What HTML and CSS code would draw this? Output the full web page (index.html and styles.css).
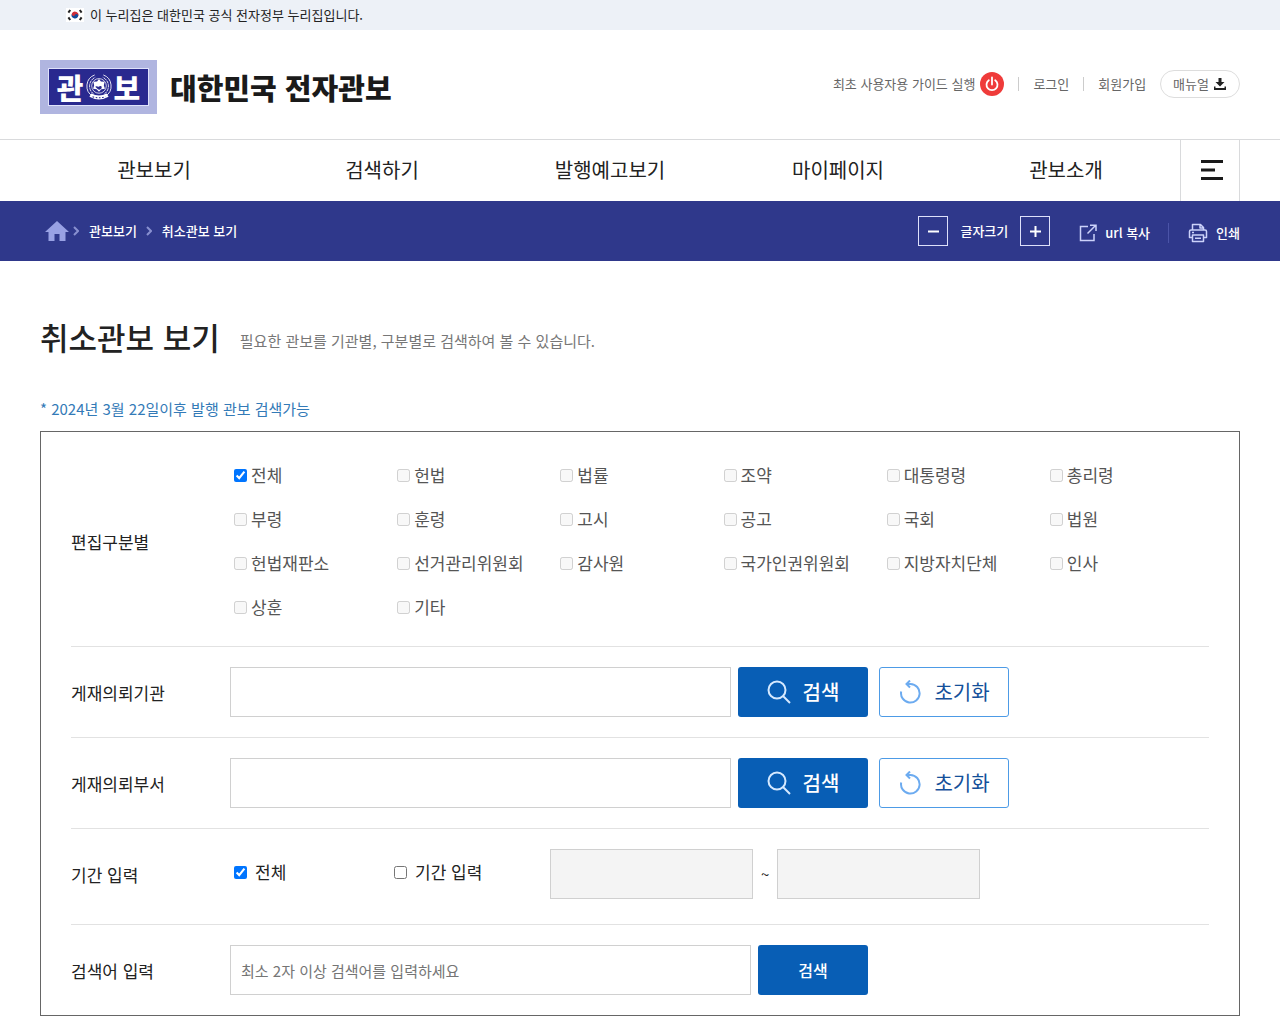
FILE: index.html
```html
<!DOCTYPE html>
<html lang="ko">
<head>
<meta charset="utf-8">
<meta name="viewport" content="width=device-width, initial-scale=1">
<title>취소관보 보기 - 대한민국 전자관보</title>
<link rel="stylesheet" href="styles.css">
</head>
<body>
<div class="notice">
  <div class="notice-inner">
    <svg class="flag" viewBox="0 0 18 14" aria-hidden="true">
      <rect width="18" height="14" fill="#fff"/>
      <g transform="rotate(28 9 7)">
        <path d="M5.600 7a3.400 3.400 0 0 1 6.800 0z" fill="#cd2e3a"/>
        <path d="M5.600 7a3.400 3.400 0 0 0 6.800 0z" fill="#0f4c9c"/>
        <circle cx="7.300" cy="7" r="1.700" fill="#cd2e3a"/>
        <circle cx="10.700" cy="7" r="1.700" fill="#0f4c9c"/>
      </g>
      <path d="M2.400 4.600 4.200 2M13.800 2l1.800 2.600M2.400 9.400 4.200 12M13.800 12l1.800-2.600" stroke="#222" stroke-width="2"/>
    </svg>
    <span>이 누리집은 대한민국 공식 전자정부 누리집입니다.</span>
  </div>
</div>

<header class="header wrap">
  <a class="logo" href="#">
    <span class="logo-mark">
      <span class="logo-plate">
        <span>관</span>
        <svg class="emblem" viewBox="0 0 24 26" aria-hidden="true" fill="none" stroke="#fff">
          <path d="M6 21.500A11 11 0 0 1 8 1.800M18 21.500A11 11 0 0 0 16 1.800" stroke-width=".8"/>
          <path d="M7 19.500A9 9 0 0 1 8.500 4M17 19.500A9 9 0 0 0 15.500 4" stroke-width=".8" stroke-dasharray="3 .6"/>
          <circle cx="12" cy="12" r="6.800" stroke-width=".7"/>
          <path d="M12 5.500 13.800 8l3.400.200-.7 3.300 1 3.200-3.300.500L12 17.500l-2.200-2.300-3.300-.5 1-3.200-.7-3.300L10.200 8z" fill="#fff" stroke="none"/>
          <path d="M8.500 12.800c1.200-1.600 2.400.6 3.700-.2 1.200-.8 2.300-.4 2.300.8 0 1.600-2 2.600-3.500 1.800" fill="#29298f" stroke="none"/>
          <path d="M4 20.500q8 4.500 16 0" stroke-width="3.600"/>
          <path d="M6 22q6 2 12 0" stroke="#29298f" stroke-dasharray="1.500 1.500"/>
        </svg>
        <span>보</span>
      </span>
    </span>
    <span class="logo-name">대한민국 전자관보</span>
  </a>
  <ul class="util">
    <li><a class="guide" href="#">최초 사용자용 가이드 실행
      <svg class="power" viewBox="0 0 24 24" aria-hidden="true">
        <circle cx="12" cy="12" r="12" fill="#ef3b3a"/>
        <path d="M8.800 8.200a5.500 5.500 0 1 0 6.400 0M12 5.500v7" fill="none" stroke="#fff" stroke-width="1.800" stroke-linecap="round"/>
      </svg></a></li>
    <li><a href="#">로그인</a></li>
    <li><a href="#">회원가입</a></li>
    <li><a class="manual" href="#">매뉴얼
      <svg class="download" viewBox="0 0 12 12" aria-hidden="true">
        <path d="M4.500 0h3v4h3L6 8.500 1.500 4h3zM0 8.500h1.500V10h9V8.500H12V12H0z" fill="#222"/>
      </svg></a></li>
  </ul>
</header>

<nav class="gnb" aria-label="주메뉴">
  <div class="wrap gnb-inner">
    <ul class="gnb-list">
      <li><a href="#">관보보기</a></li>
      <li><a href="#">검색하기</a></li>
      <li><a href="#">발행예고보기</a></li>
      <li><a href="#">마이페이지</a></li>
      <li><a href="#">관보소개</a></li>
    </ul>
    <button class="menu" type="button" aria-label="전체메뉴">
      <svg viewBox="0 0 22 20" width="22" height="20" aria-hidden="true">
        <path d="M0 1.500h22M0 10h14M0 18.500h22" stroke="#1a1a1a" stroke-width="3"/>
      </svg>
    </button>
  </div>
</nav>

<div class="location">
  <div class="wrap location-inner">
    <ol class="crumbs">
      <li><a class="home" href="#" aria-label="홈">
        <svg viewBox="0 0 24 20" width="24" height="20" aria-hidden="true">
          <path d="M12 0 0 11h3.500v9h6v-7h5v7h6v-9H24z" fill="#98a1e4"/>
        </svg></a></li>
      <li><svg class="arrow" viewBox="0 0 6 10" aria-hidden="true"><path d="m1 1 4 4-4 4"/></svg><a href="#">관보보기</a></li>
      <li><svg class="arrow" viewBox="0 0 6 10" aria-hidden="true"><path d="m1 1 4 4-4 4"/></svg><a href="#">취소관보 보기</a></li>
    </ol>
    <div class="tools">
      <div class="font-size">
        <button type="button" aria-label="글자 작게"><svg viewBox="0 0 11 11" width="11" height="11"><path d="M0 5.500h11"/></svg></button>
        <span>글자크기</span>
        <button type="button" aria-label="글자 크게"><svg viewBox="0 0 11 11" width="11" height="11"><path d="M0 5.500h11M5.500 0v11"/></svg></button>
      </div>
      <button class="tool" type="button">
        <svg viewBox="0 0 18 18" width="18" height="18" aria-hidden="true" fill="none" stroke="#ccd2fa" stroke-width="1.500">
          <path d="M9 2.500H1.500v14H15V10M8.500 9.500 16.500 1.500M11 1.200h6V7"/>
        </svg>url 복사</button>
      <button class="tool" type="button">
        <svg viewBox="0 0 20 20" width="20" height="20" aria-hidden="true" fill="none" stroke="#ccd2fa" stroke-width="1.500" stroke-linejoin="round">
          <path d="M4.500 7V1.500h8l3 3V7M12 1.500V5h3.500M4.500 14.500h-3V8.500Q1.500 7 3 7h14q1.500 0 1.500 1.500v6h-3M4.500 12h11v6.500h-11zM7 15.200h6M4 9.500h2"/>
        </svg>인쇄</button>
    </div>
  </div>
</div>

<main class="wrap">
  <div class="heading">
    <h1>취소관보 보기</h1>
    <p>필요한 관보를 기관별, 구분별로 검색하여 볼 수 있습니다.</p>
  </div>
  <p class="hint">* 2024년 3월 22일이후 발행 관보 검색가능</p>

  <form class="search">
    <div class="row row-kinds" role="group" aria-labelledby="kind">
      <span class="row-title" id="kind">편집구분별</span>
      <div class="kinds">
        <label><input type="checkbox" checked>전체</label>
        <label><input type="checkbox" disabled>헌법</label>
        <label><input type="checkbox" disabled>법률</label>
        <label><input type="checkbox" disabled>조약</label>
        <label><input type="checkbox" disabled>대통령령</label>
        <label><input type="checkbox" disabled>총리령</label>
        <label><input type="checkbox" disabled>부령</label>
        <label><input type="checkbox" disabled>훈령</label>
        <label><input type="checkbox" disabled>고시</label>
        <label><input type="checkbox" disabled>공고</label>
        <label><input type="checkbox" disabled>국회</label>
        <label><input type="checkbox" disabled>법원</label>
        <label><input type="checkbox" disabled>헌법재판소</label>
        <label><input type="checkbox" disabled>선거관리위원회</label>
        <label><input type="checkbox" disabled>감사원</label>
        <label><input type="checkbox" disabled>국가인권위원회</label>
        <label><input type="checkbox" disabled>지방자치단체</label>
        <label><input type="checkbox" disabled>인사</label>
        <label><input type="checkbox" disabled>상훈</label>
        <label><input type="checkbox" disabled>기타</label>
      </div>
    </div>

    <div class="row">
      <label class="row-title" for="org">게재의뢰기관</label>
      <div class="field">
        <input class="text" id="org" type="text">
        <button class="btn btn-fill" type="button">
          <svg viewBox="0 0 24 24" width="24" height="24" aria-hidden="true" fill="none" stroke="#d5e9ff" stroke-width="2"><circle cx="10" cy="10" r="8.500"/><path d="m16 16 7 7"/></svg>검색</button>
        <button class="btn btn-line" type="reset">
          <svg viewBox="0 0 24 24" width="24" height="24" aria-hidden="true" fill="none" stroke="#6cabf0" stroke-width="2"><path d="M3.200 11.500a9.300 9.300 0 1 0 9.300-7.500H8.500M12 .500 8.500 4 12 7.500"/></svg>초기화</button>
      </div>
    </div>

    <div class="row">
      <label class="row-title" for="dept">게재의뢰부서</label>
      <div class="field">
        <input class="text" id="dept" type="text">
        <button class="btn btn-fill" type="button">
          <svg viewBox="0 0 24 24" width="24" height="24" aria-hidden="true" fill="none" stroke="#d5e9ff" stroke-width="2"><circle cx="10" cy="10" r="8.500"/><path d="m16 16 7 7"/></svg>검색</button>
        <button class="btn btn-line" type="reset">
          <svg viewBox="0 0 24 24" width="24" height="24" aria-hidden="true" fill="none" stroke="#6cabf0" stroke-width="2"><path d="M3.200 11.500a9.300 9.300 0 1 0 9.300-7.500H8.500M12 .500 8.500 4 12 7.500"/></svg>초기화</button>
      </div>
    </div>

    <div class="row row-period" role="group" aria-labelledby="period">
      <span class="row-title" id="period">기간 입력</span>
      <div class="period">
        <label><input type="checkbox" checked>전체</label>
        <label><input type="checkbox">기간 입력</label>
        <div class="dates">
          <input class="date" type="text" aria-label="시작일" disabled>
          <span>~</span>
          <input class="date" type="text" aria-label="종료일" disabled>
        </div>
      </div>
    </div>

    <div class="row">
      <label class="row-title" for="word">검색어 입력</label>
      <div class="field">
        <input class="text text-word" id="word" type="text" placeholder="최소 2자 이상 검색어를 입력하세요">
        <button class="btn btn-fill btn-small" type="submit">검색</button>
      </div>
    </div>
  </form>
</main>
</body>
</html>
```
FILE: styles.css
```css
* {
  box-sizing: border-box;
}

body {
  margin: 0;
  background: #fff;
  color: #222;
  font: 400 17px/24px "Noto Sans CJK KR", "Noto Sans", sans-serif;
}

ul,
ol,
p,
h1 {
  margin: 0;
  padding: 0;
  list-style: none;
}

a {
  color: inherit;
  text-decoration: none;
}

button,
input {
  font: inherit;
  color: inherit;
}

button {
  padding: 0;
  border: 0;
  background: none;
  cursor: pointer;
}

svg {
  flex: none;
}

.wrap {
  max-width: 1280px;
  margin: 0 auto;
  padding: 0 40px;
}

/* government notice strip */
.notice {
  background: #edf1f7;
  font-size: 13px;
}

.notice-inner {
  display: flex;
  align-items: center;
  gap: 6px;
  max-width: 1280px;
  height: 30px;
  margin: 0 auto;
  padding: 0 66px;
}

.flag {
  width: 18px;
  height: 14px;
}

/* header */
.header {
  display: flex;
  align-items: center;
  justify-content: space-between;
  padding-top: 30px;
  padding-bottom: 25px;
}

.logo {
  display: flex;
  align-items: center;
  gap: 13px;
}

.logo-mark {
  padding: 8px;
  background: #b0b5e0;
}

.logo-plate {
  display: flex;
  align-items: center;
  justify-content: center;
  width: 101px;
  height: 38px;
  border: 1px solid #dfe2fa;
  background: #29298f;
  color: #fff;
  font-size: 29px;
  font-weight: 900;
}

.emblem {
  width: 26px;
  height: 28px;
  margin: 0 2px;
}

.logo-name {
  color: #1a1a1a;
  font-size: 29px;
  font-weight: 900;
}

.util {
  display: flex;
  align-items: center;
  margin-top: -6px;
  color: #666;
  font-size: 13px;
}

.util li + li {
  display: flex;
  align-items: center;
  margin-left: 14px;
}

.util li:nth-child(2)::before,
.util li:nth-child(3)::before {
  content: "";
  width: 1px;
  height: 14px;
  margin-right: 14px;
  background: #ccc;
}

.guide,
.manual {
  display: flex;
  align-items: center;
  gap: 5px;
}

.power {
  width: 24px;
  height: 24px;
}

.manual {
  height: 28px;
  padding: 0 13px 0 12px;
  border: 1px solid #ddd;
  border-radius: 14px;
}

.download {
  width: 12px;
  height: 12px;
}

/* main navigation */
.gnb {
  border-top: 1px solid #d9dadc;
}

.gnb-inner {
  display: flex;
}

.gnb-list {
  display: grid;
  flex: 1;
  grid-template-columns: repeat(5, 1fr);
  font-size: 20px;
}

.gnb-list a {
  display: block;
  padding-bottom: 1px;
  line-height: 60px;
  text-align: center;
}

.menu {
  display: flex;
  align-items: center;
  justify-content: center;
  width: 60px;
  padding: 0 0 2px 3px;
  border: solid #d9dadc;
  border-width: 0 1px;
}

/* breadcrumb bar */
.location {
  background: #2f388b;
  color: #fff;
  font-size: 13px;
  font-weight: 500;
}

.location-inner {
  display: flex;
  align-items: center;
  justify-content: space-between;
  height: 60px;
}

.crumbs,
.crumbs li {
  display: flex;
  align-items: center;
}

.crumbs li + li {
  gap: 10px;
  margin-left: 9px;
}

.crumbs li:nth-child(2) {
  margin-left: 4px;
}

.home {
  display: flex;
  margin-left: 5px;
}

.arrow {
  width: 6px;
  height: 10px;
  fill: none;
  stroke: #8990d0;
  stroke-width: 2;
}

.tools,
.font-size,
.tool {
  display: flex;
  align-items: center;
}

.font-size {
  gap: 12px;
  margin-right: 29px;
}

.font-size button {
  display: flex;
  align-items: center;
  justify-content: center;
  width: 30px;
  height: 30px;
  border: 1px solid #dde0fa;
}

.font-size svg {
  stroke: #fff;
  stroke-width: 2;
}

.tool {
  gap: 8px;
  padding-top: 3px;
}

.tool + .tool {
  margin-left: 18px;
}

.tool + .tool::before {
  content: "";
  width: 1px;
  height: 20px;
  margin-right: 11px;
  background: #4b54a8;
}

/* page heading */
.heading {
  display: flex;
  align-items: center;
  gap: 20px;
  padding-top: 52px;
}

.heading h1 {
  font-size: 31px;
  font-weight: 500;
  line-height: 48px;
}

.heading p {
  padding-top: 8px;
  color: #777;
  font-size: 15px;
}

.hint {
  margin-top: 36px;
  color: #337ab7;
  font-size: 15px;
}

/* search form */
.search {
  margin: 10px 0 7px;
  padding: 0 30px;
  border: 1px solid #666;
}

.row {
  display: grid;
  grid-template-columns: 159px 1fr;
  align-items: center;
  padding: 20px 0;
}

.row + .row {
  border-top: 1px solid #e2e2e2;
}

.row-kinds {
  padding: 21px 0 17px;
}

.row-period {
  padding-bottom: 25px;
}

.row-title {
  padding-top: 2px;
}

.kinds {
  display: grid;
  grid-template-columns: repeat(6, 1fr);
  color: #555;
  line-height: 44px;
}

.kinds label,
.period label {
  display: flex;
  align-items: center;
}

input[type="checkbox"] {
  flex: none;
  width: 13px;
  height: 13px;
  margin: 0 4px;
}

.field {
  display: flex;
  align-items: center;
}

.text,
.date {
  height: 50px;
  padding: 0 10px;
  border: 1px solid #d0d0d0;
  border-radius: 0;
  background: #fff;
}

.text {
  width: 501px;
  font-size: 15px;
}

.text-word {
  width: 521px;
}

.text::placeholder {
  color: #757575;
}

.btn {
  display: flex;
  align-items: center;
  justify-content: center;
  gap: 12px;
  width: 130px;
  height: 50px;
  margin-left: 7px;
  border-radius: 3px;
  font-size: 20px;
}

.btn-fill {
  background: #085eb5;
  color: #fff;
  font-weight: 500;
}

.btn-line {
  margin-left: 11px;
  border: 1px solid #4d9be6;
  background: #fff;
  color: #14509a;
}

.btn-small {
  width: 110px;
  font-size: 16px;
}

.period {
  display: flex;
  align-items: center;
}

.period label {
  width: 160px;
  gap: 4px;
  padding-bottom: 4px;
}

.dates {
  display: flex;
  align-items: center;
  gap: 8px;
  font-size: 15px;
}

.date {
  width: 203px;
  background: #f4f4f4;
}
```
